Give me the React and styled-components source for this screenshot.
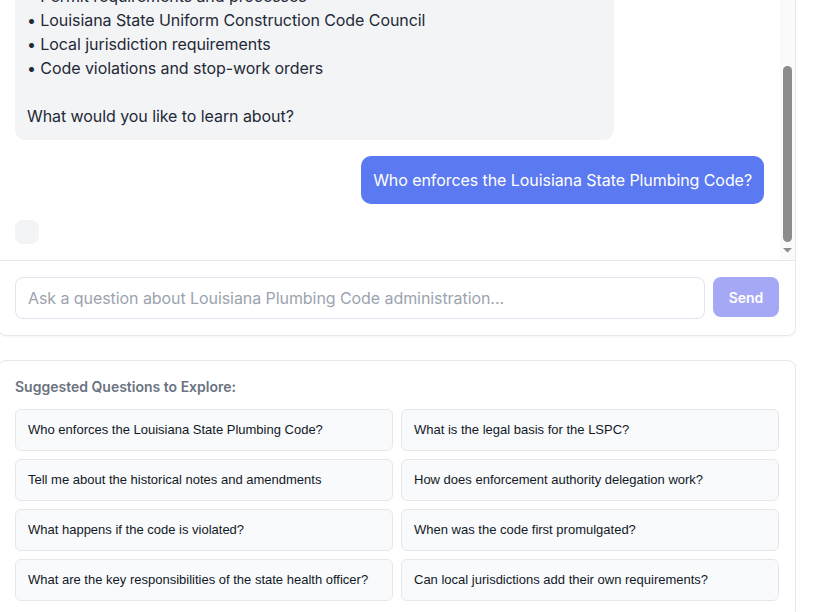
import React from "react";
import styled, { createGlobalStyle } from "styled-components";

const GlobalStyle = createGlobalStyle`
  *, *::before, *::after { box-sizing: border-box; }
  html, body { margin: 0; padding: 0; height: 100%; overflow: hidden; background: #ffffff; }
  body { font-family: Inter, "Noto Sans", sans-serif; color: #1f2937; }
`;

const Page = styled.div`
  height: 100vh;
  width: 798px;
  margin-left: -2px;
  display: flex;
  flex-direction: column;
  justify-content: flex-end;
  overflow: hidden;
`;

const Stack = styled.div`
  display: flex;
  flex-direction: column;
  gap: 24px;
  margin-bottom: -6px;
`;

const Card = styled.section`
  background: #ffffff;
  border: 1px solid #e5e7eb;
  border-radius: 8px;
  box-shadow: 0 1px 2px rgba(0, 0, 0, 0.04);
  overflow: hidden;
`;

const ChatCard = styled(Card)`
  display: flex;
  flex-direction: column;
`;

const MessagesArea = styled.div`
  height: 305px;
  display: flex;
`;

const MessagesScroll = styled.div`
  flex: 1;
  min-width: 0;
  overflow-y: auto;
  display: flex;
  flex-direction: column-reverse;
  scrollbar-width: none;
  &::-webkit-scrollbar { display: none; }
`;

const Rail = styled.div`
  width: 15px;
  flex: none;
  display: flex;
  flex-direction: column;
  background: #fafafa;
`;

const RailButton = styled.div`
  height: 15px;
  flex: none;
  display: flex;
  align-items: center;
  justify-content: center;
`;

const RailTrack = styled.div`
  flex: 1;
  display: flex;
  flex-direction: column;
  justify-content: flex-end;
  align-items: center;
  padding-bottom: 3px;
`;

const Thumb = styled.div`
  width: 9px;
  height: ${(p) => p.$size}px;
  border-radius: 5px;
  background: #8c8c8c;
`;

const MessageList = styled.div`
  padding: 16px;
  display: flex;
  flex-direction: column;
  gap: 16px;
`;

const Bubble = styled.div`
  align-self: ${(p) => (p.$user ? "flex-end" : "flex-start")};
  max-width: 80%;
  padding: 12px;
  border-radius: 10px;
  background: ${(p) => (p.$user ? "#5b79f1" : "#f3f4f6")};
  color: ${(p) => (p.$user ? "#ffffff" : "#1f2937")};
  font-size: 16px;
  line-height: 24px;
  letter-spacing: -0.07px;
  white-space: pre-wrap;
`;

const Typing = styled.div`
  align-self: flex-start;
  width: 24px;
  height: 24px;
  border-radius: 8px;
  background: #f3f4f6;
`;

const InputRow = styled.form`
  display: flex;
  align-items: flex-start;
  gap: 8px;
  padding: 16px;
  border-top: 1px solid #e5e7eb;
`;

const TextInput = styled.input`
  flex: 1;
  height: 42px;
  padding: 0 12px;
  border: 1px solid #e1e4ef;
  border-radius: 8px;
  font-family: Inter, "Noto Sans", sans-serif;
  font-size: 16px;
  letter-spacing: -0.07px;
  color: #1f2937;
  outline: none;
  &::placeholder { color: #9ca3af; }
`;

const SendButton = styled.button`
  width: 66px;
  height: 40px;
  border: none;
  border-radius: 8px;
  background: #a5a8f5;
  color: #ffffff;
  font-family: Inter, "Noto Sans", sans-serif;
  font-size: 14px;
  font-weight: 600;
`;

const SuggestCard = styled(Card)`
  padding: 16px;
`;

const SuggestTitle = styled.h3`
  margin: 0 0 12px;
  font-size: 14px;
  line-height: 20px;
  font-weight: 600;
  color: #6b7280;
`;

const SuggestGrid = styled.div`
  display: grid;
  grid-template-columns: 1fr 1fr;
  gap: 8px;
`;

const SuggestButton = styled.button`
  text-align: left;
  padding: 12px;
  background: #f9fafb;
  border: 1px solid #e5e7eb;
  border-radius: 6px;
  font-family: "Liberation Sans", Arial, sans-serif;
  font-size: 13px;
  line-height: 16px;
  color: #111827;
`;

const Arrow = ({ up }) => (
  <svg width="15" height="15" viewBox="0 0 15 15">
    <path d={up ? "M3 12h9l-4.5-4.5z" : "M3 3h9l-4.5 4.5z"} fill="#8c8c8c" />
  </svg>
);

const welcome = `Hello! I'm your Louisiana State Plumbing Code assistant. I can help you understand:

• Code administration and enforcement
• State health officer responsibilities
• Legal basis and statutory authority
• Historical notes and amendments
• Permit requirements and processes
• Louisiana State Uniform Construction Code Council
• Local jurisdiction requirements
• Code violations and stop-work orders

What would you like to learn about?`;

const suggestions = [
  "Who enforces the Louisiana State Plumbing Code?",
  "What is the legal basis for the LSPC?",
  "Tell me about the historical notes and amendments",
  "How does enforcement authority delegation work?",
  "What happens if the code is violated?",
  "When was the code first promulgated?",
  "What are the key responsibilities of the state health officer?",
  "Can local jurisdictions add their own requirements?",
];

export default function App() {
  return (
    <>
      <GlobalStyle />
      <Page>
        <Stack>
          <ChatCard>
            <MessagesArea>
              <MessagesScroll>
                <MessageList>
                  <Bubble>{welcome}</Bubble>
                  <Bubble $user>Who enforces the Louisiana State Plumbing Code?</Bubble>
                  <Typing />
                </MessageList>
              </MessagesScroll>
              <Rail aria-hidden="true">
                <RailButton><Arrow up /></RailButton>
                <RailTrack>
                  <Thumb $size={176} />
                </RailTrack>
                <RailButton><Arrow /></RailButton>
              </Rail>
            </MessagesArea>
            <InputRow onSubmit={(e) => e.preventDefault()}>
              <TextInput placeholder="Ask a question about Louisiana Plumbing Code administration..." />
              <SendButton type="submit" disabled>Send</SendButton>
            </InputRow>
          </ChatCard>
          <SuggestCard>
            <SuggestTitle>Suggested Questions to Explore:</SuggestTitle>
            <SuggestGrid>
              {suggestions.map((q) => (
                <SuggestButton key={q} type="button">{q}</SuggestButton>
              ))}
            </SuggestGrid>
          </SuggestCard>
        </Stack>
      </Page>
    </>
  );
}
